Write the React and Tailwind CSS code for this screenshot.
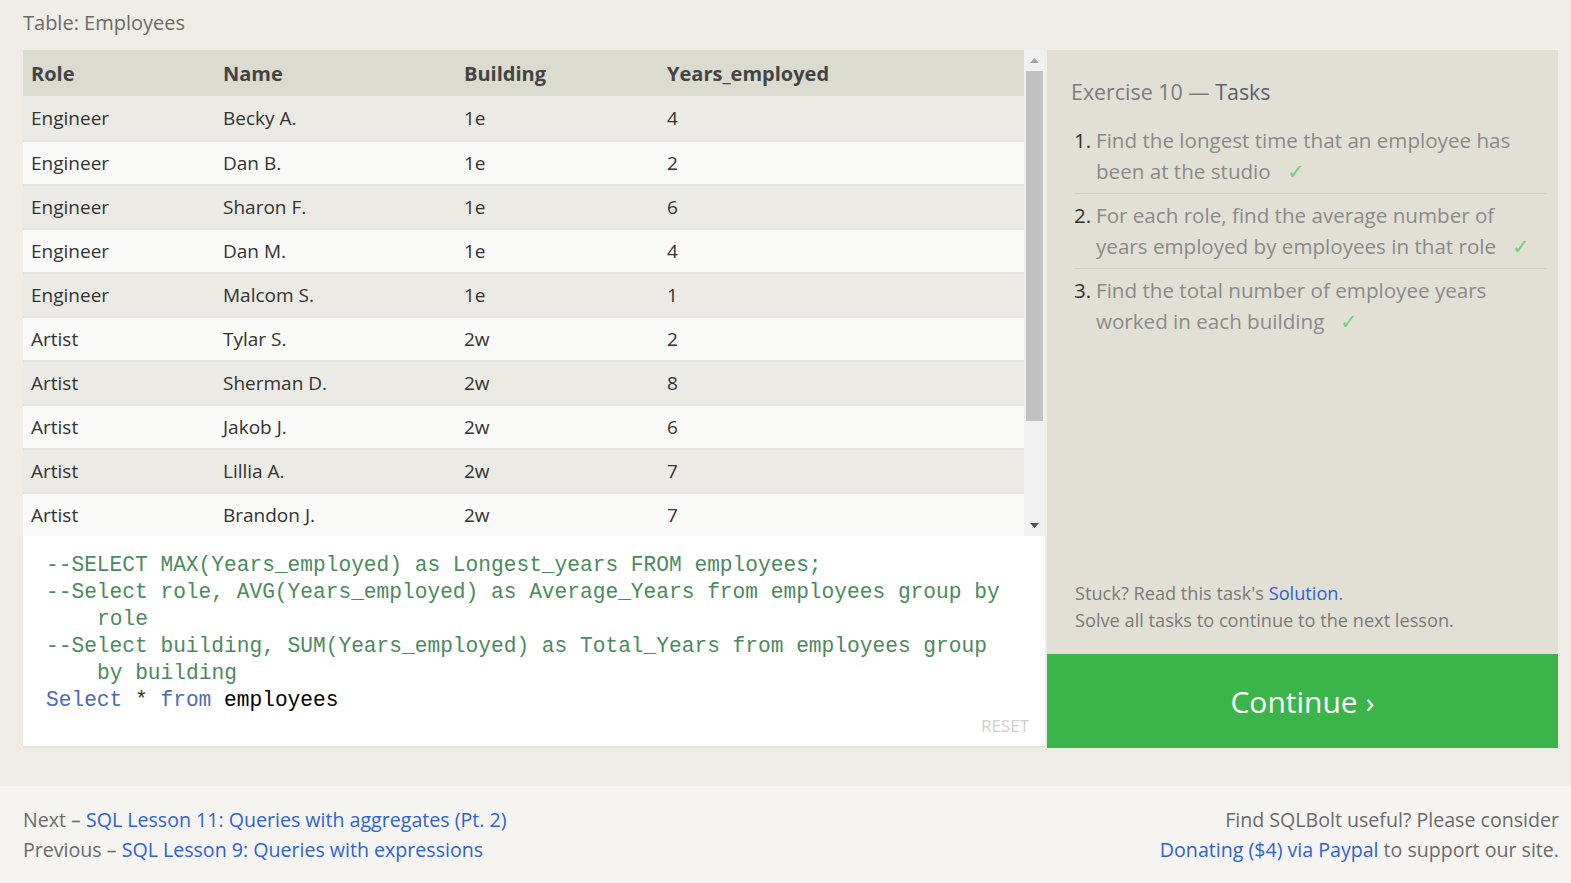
import React from "react";

const rows = [
  ["Engineer", "Becky A.", "1e", "4"],
  ["Engineer", "Dan B.", "1e", "2"],
  ["Engineer", "Sharon F.", "1e", "6"],
  ["Engineer", "Dan M.", "1e", "4"],
  ["Engineer", "Malcom S.", "1e", "1"],
  ["Artist", "Tylar S.", "2w", "2"],
  ["Artist", "Sherman D.", "2w", "8"],
  ["Artist", "Jakob J.", "2w", "6"],
  ["Artist", "Lillia A.", "2w", "7"],
  ["Artist", "Brandon J.", "2w", "7"],
];

const tasks = [
  "Find the longest time that an employee has been at the studio",
  "For each role, find the average number of years employed by employees in that role",
  "Find the total number of employee years worked in each building",
];

function Check() {
  return <span className="ml-[16px] text-[#6fcf7f]">✓</span>;
}

export default function App() {
  return (
    <div className="min-h-screen flex flex-col bg-[#efede6] font-['Open_Sans',sans-serif]">
      <div className="pl-[23px] pt-[10px] pb-[38px]">
        <div className="text-[20px] leading-[26px] h-[26px] text-[#6b6b6b]">Table: Employees</div>
        <div className="mt-[14px] flex w-[1535px]">
          <div className="w-[1022px] flex flex-col">
            <div className="flex h-[486px]">
              <div className="w-[1001px] flex flex-col">
                <div className="grid grid-cols-[192px_241px_203px_1fr] pl-[8px] pt-[2px] h-[46px] items-center bg-[#dcdbcf] text-[20px] font-bold text-[#444]">
                  <div>Role</div>
                  <div>Name</div>
                  <div>Building</div>
                  <div>Years_employed</div>
                </div>
                {rows.map((r, i) => (
                  <div
                    key={i}
                    className={
                      "grid grid-cols-[192px_241px_203px_1fr] pl-[8px] h-[44px] items-center text-[19px] text-[#333] " +
                      (i % 2 === 0 ? "bg-[#ebeae4] " : "bg-[#f9f9f8] ") +
                      (i > 0 ? "border-t-2 border-[#e3e3de]" : "")
                    }
                  >
                    <div>{r[0]}</div>
                    <div>{r[1]}</div>
                    <div>{r[2]}</div>
                    <div>{r[3]}</div>
                  </div>
                ))}
              </div>
              <div className="w-[21px] bg-[#f1f1f1] flex flex-col items-center">
                <div className="h-[21px] flex items-center justify-center">
                  <svg width="9" height="5" viewBox="0 0 9 5">
                    <path d="M0 5 L4.5 0 L9 5 Z" fill="#a3a3a3" />
                  </svg>
                </div>
                <div className="w-[17px] h-[350px] bg-[#c1c1c1]" />
                <div className="flex-1" />
                <div className="h-[21px] flex items-center justify-center">
                  <svg width="9" height="5" viewBox="0 0 9 5">
                    <path d="M0 0 L9 0 L4.5 5 Z" fill="#505050" />
                  </svg>
                </div>
              </div>
            </div>
            <div className="h-[212px] bg-white border-b-2 border-[#e4e3dc] flex flex-col pl-[23px] pt-[16px] pr-[12px] pb-[11px]">
              <div className="w-[965px] font-['Liberation_Mono',monospace] text-[21.2px] leading-[27px] whitespace-pre-wrap">
                <div className="pl-[51px] indent-[-51px] text-[#4b8a60]">--SELECT MAX(Years_employed) as Longest_years FROM employees;</div>
                <div className="pl-[51px] indent-[-51px] text-[#4b8a60]">--Select role, AVG(Years_employed) as Average_Years from employees group by role</div>
                <div className="pl-[51px] indent-[-51px] text-[#4b8a60]">--Select building, SUM(Years_employed) as Total_Years from employees group by building</div>
                <div className="pl-[51px] indent-[-51px]">
                  <span className="text-[#4d6ab5]">Select</span>
                  <span className="text-[#333]"> * </span>
                  <span className="text-[#4d6ab5]">from</span>
                  <span className="text-black"> employees</span>
                </div>
              </div>
              <div className="mt-auto self-end text-[17px] leading-[24px] text-[#cfcfcf] pr-[4px]">RESET</div>
            </div>
          </div>
          <div className="ml-[2px] w-[511px] flex flex-col">
            <div className="flex-1 bg-[#e2e0d5] flex flex-col pt-[27px] pb-[20px]">
              <div className="pl-[24px] text-[21.4px] leading-[30px] text-[#7a7b82]">
                Exercise 10 — <span className="text-[#5a6070]">Tasks</span>
              </div>
              <ul className="mt-[12px] pl-[27px] pr-[12px]">
                {tasks.map((t, i) => (
                  <li
                    key={i}
                    className={
                      "flex py-[6px] pr-[10px] text-[20.6px] leading-[31px] " +
                      (i < tasks.length - 1 ? "border-b border-[#d2d0c4]" : "")
                    }
                  >
                    <span className="w-[22px] shrink-0 text-[#333]">{i + 1}.</span>
                    <span className="text-[#8a8a8a]">
                      {t}
                      <Check />
                    </span>
                  </li>
                ))}
              </ul>
              <div className="mt-auto pl-[28px] text-[18.2px] leading-[27px] text-[#7a7a7a]">
                <div>
                  Stuck? Read this task's <span className="text-[#2f62d8]">Solution</span>.
                </div>
                <div>Solve all tasks to continue to the next lesson.</div>
              </div>
            </div>
            <div className="h-[94px] bg-[#3bb54a] flex items-center justify-center text-white text-[30px]">
              Continue ›
            </div>
          </div>
        </div>
      </div>
      <div className="flex-1 bg-[#f5f4f0] pt-[19px] pl-[23px] flex">
        <div className="w-[1536px] flex justify-between text-[19.6px] leading-[30px] text-[#6b6b6b]">
          <div>
            <div>
              Next – <span className="text-[#2f62d8]">SQL Lesson 11: Queries with aggregates (Pt. 2)</span>
            </div>
            <div>
              Previous – <span className="text-[#2f62d8]">SQL Lesson 9: Queries with expressions</span>
            </div>
          </div>
          <div className="text-right">
            <div>Find SQLBolt useful? Please consider</div>
            <div>
              <span className="text-[#2f62d8]">Donating ($4) via Paypal</span> to support our site.
            </div>
          </div>
        </div>
      </div>
    </div>
  );
}
